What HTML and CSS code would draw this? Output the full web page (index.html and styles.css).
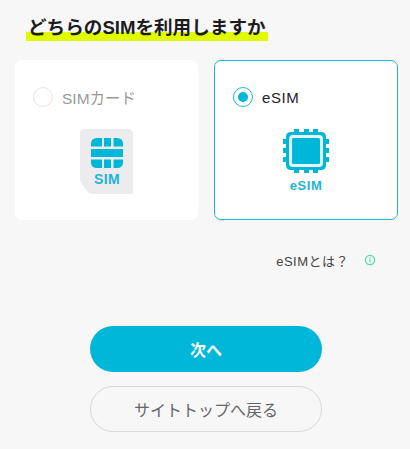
FILE: index.html
```html
<!DOCTYPE html>
<html lang="ja">
<head>
    <meta charset="UTF-8">
    <meta name="viewport" content="width=device-width, initial-scale=1.0">
    <title>SIM選択</title>
    <link rel="stylesheet" href="styles.css">
</head>
<body>
    <h1 class="page-title"><span class="title-mark">どちらのSIMを利用しますか</span></h1>

    <div class="sim-options">
        <div class="sim-card">
            <div class="sim-label">
                <span class="radio"></span>
                <span class="sim-name">SIMカード</span>
            </div>
            <div class="sim-icon">
                <svg width="54" height="66" viewBox="0 0 54 66">
                    <path d="M4 0H50L53 3V65H12Q9 65 7 62L1 54Q0 52 0 50V4Q0 0 4 0Z" fill="#ececee"/>
                    <path d="M11 17.500V15Q11 9 17 9H22V17.500ZM24 9H31V17.500H24ZM33.500 9H37Q43 9 43 15V17.500H33.500ZM11 20H43V28H11ZM11 30.500H22V39H17Q11 39 11 33ZM24 30.500H31V39H24ZM33.500 30.500H43V33Q43 39 37 39H33.500Z" fill="#00b7d7"/>
                    <text x="27" y="55" class="icon-text">SIM</text>
                </svg>
            </div>
        </div>
        <div class="sim-card sim-card-active">
            <div class="sim-label">
                <span class="radio radio-on"></span>
                <span class="sim-name">eSIM</span>
            </div>
            <div class="sim-icon esim-icon">
                <svg width="46" height="64" viewBox="0 0 46 64">
                    <path d="M11 0H16V3H21V0H26V3H30V0H35V3H38Q43 3 43 8V10H46V15H43V19H46V24H43V28H46V33H43V36Q43 41 38 41H35V44H30V41H26V44H21V41H16V44H11V41H8Q3 41 3 36V33H0V28H3V24H0V19H3V15H0V10H3V8Q3 3 8 3H11Z" fill="#00b7d7"/>
                    <rect x="6" y="6" width="34" height="32" rx="4" fill="#e3f5f8"/>
                    <rect x="9" y="9" width="28" height="26" rx="1.500" fill="#00b7d7"/>
                    <text x="23" y="61" class="icon-text icon-text-small">eSIM</text>
                </svg>
            </div>
        </div>
    </div>

    <div class="help-row">
        <span class="help-text">eSIMとは？</span>
        <svg class="help-icon" width="12" height="12" viewBox="0 0 12 12">
            <circle cx="6" cy="6" r="4.600" fill="none" stroke="#4fdcae" stroke-width="1.300"/>
            <rect x="5.400" y="5" width="1.200" height="3.200" fill="#4fdcae"/>
            <rect x="5.400" y="3.200" width="1.200" height="1.100" fill="#4fdcae"/>
        </svg>
    </div>

    <div class="button-group">
        <button class="btn btn-next" type="button">次へ</button>
        <button class="btn btn-back" type="button">サイトトップへ戻る</button>
    </div>
</body>
</html>
```

FILE: styles.css
```css
body {
    margin: 0;
    padding: 0;
    height: 449px;
    overflow: hidden;
    background-color: #f7f7f8;
    color: #222222;
    font-family: "Liberation Sans", "Noto Sans CJK JP", sans-serif;
}

.page-title {
    margin: 0;
    padding: 16px 0 0 26px;
    height: 43px;
    box-sizing: border-box;
    font-size: 18.600px;
    line-height: 24px;
    font-weight: 700;
    color: #1c1c1c;
}

.title-mark {
    display: inline-block;
    height: 25px;
    padding: 0 2px;
    background: linear-gradient(transparent 16px, #e0fa00 16px, #e0fa00 25px);
}

.sim-options {
    display: flex;
    gap: 16px;
    margin: 17px 12px 0 15px;
}

.sim-card {
    width: 183px;
    height: 160px;
    box-sizing: border-box;
    padding: 25px 18px 0;
    background-color: #ffffff;
    border-radius: 7px;
}

.sim-card-active {
    width: 184px;
    border: 1px solid #1ab8d8;
    padding: 24px 18px 0;
}

.sim-label {
    display: flex;
    align-items: center;
    gap: 9px;
    height: 24px;
}

.radio {
    width: 18px;
    height: 18px;
    border: 1px solid #e4e4e6;
    border-radius: 50%;
    background-color: #ffffff;
    flex-shrink: 0;
}

.radio-on {
    position: relative;
    border-color: #1ab8d8;
}

.radio-on::after {
    content: "";
    position: absolute;
    top: 4px;
    left: 4px;
    width: 10px;
    height: 10px;
    border-radius: 50%;
    background-color: #00b7d7;
}

.sim-name {
    font-size: 15.500px;
    color: #999999;
}

.sim-card-active .sim-name {
    color: #222222;
    font-size: 15px;
    letter-spacing: 0.6px;
}

.sim-icon {
    display: flex;
    justify-content: center;
    margin-top: 20px;
}

.sim-icon svg {
    display: block;
}

.esim-icon {
    margin-top: 20px;
}

.icon-text {
    fill: #1eb5d6;
    font-size: 14px;
    font-weight: 700;
    text-anchor: middle;
    letter-spacing: 0.3px;
}

.icon-text-small {
    font-size: 13px;
    letter-spacing: 0.6px;
}

.help-row {
    display: flex;
    align-items: center;
    justify-content: flex-end;
    gap: 15px;
    height: 24px;
    margin-top: 28px;
    padding-right: 34px;
}

.help-text {
    font-size: 13px;
    color: #444444;
    letter-spacing: 0.5px;
}

.button-group {
    display: flex;
    flex-direction: column;
    align-items: center;
    gap: 14px;
    margin-top: 54px;
    padding-left: 2px;
}

.btn {
    width: 232px;
    height: 46px;
    border-radius: 23px;
    font-family: inherit;
    font-size: 16px;
    padding: 0;
}

.btn-next {
    border: none;
    background-color: #00b7d7;
    color: #ffffff;
    font-weight: 700;
}

.btn-back {
    border: 1px solid #d8d8d8;
    background-color: #f7f7f8;
    color: #666666;
}
```
